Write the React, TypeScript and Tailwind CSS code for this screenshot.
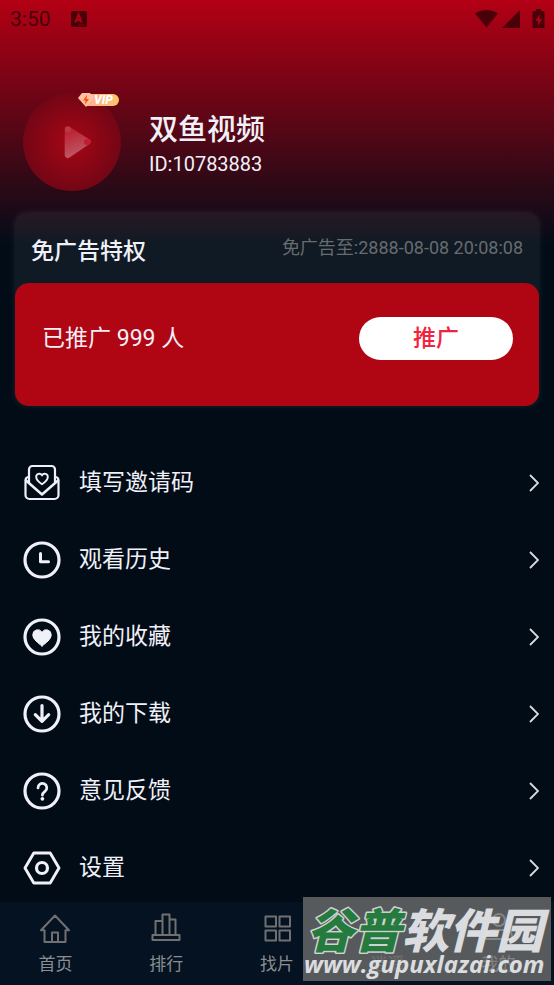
// src/pages/ProfilePage.tsx
import React from "react";

const menuItems = [
  { label: "填写邀请码", icon: "invite" },
  { label: "观看历史", icon: "history" },
  { label: "我的收藏", icon: "favorite" },
  { label: "我的下载", icon: "download" },
  { label: "意见反馈", icon: "feedback" },
  { label: "设置", icon: "settings" }
];

const tabs = [
  { label: "首页", icon: "home" },
  { label: "排行", icon: "rank" },
  { label: "找片", icon: "grid" },
  { label: "逍遥", icon: "discover" },
  { label: "我的", icon: "user" }
];

const activeTab = "user";

function MenuIcon({ name }: { name: string }) {
  return (
    <svg viewBox="0 0 38 38" className="size-[38px] shrink-0" fill="none" stroke="#f0f0f8" strokeLinecap="round" strokeLinejoin="round" aria-hidden="true">
      {name === "invite" && (
        <g strokeWidth="2.200">
          <path d="M6 19V5.500a3.500 3.500 0 0 1 3.500-3.500h19a3.500 3.500 0 0 1 3.500 3.500V19" />
          <path d="M6 13c-2 0-3.500 1.500-3.500 3.500V31a4 4 0 0 0 4 4h25a4 4 0 0 0 4-4V16.500C35.500 14.500 34 13 32 13" />
          <path d="M3 16.500 19 30.500 35 16.500" strokeWidth="2.500" />
          <path d="M19 20.200c-2.500-1.700-5.800-4-5.800-7.200a3.100 3.100 0 0 1 5.800-1.600A3.100 3.100 0 0 1 24.800 13c0 3.200-3.300 5.500-5.800 7.200Z" strokeWidth="1.900" />
        </g>
      )}
      {["history", "favorite", "download", "feedback"].includes(name) && (
        <circle cx="19" cy="19" r="17" strokeWidth="3.200" />
      )}
      {name === "history" && <path d="M17.500 12.500V20.800H25.500" strokeWidth="3" />}
      {name === "favorite" && (
        <path d="M19 28c-4-3-9.200-6.700-9.200-11.200A4.900 4.900 0 0 1 19 14.300a4.900 4.900 0 0 1 9.200 2.500C28.200 21.300 23 25 19 28Z" fill="#f0f0f8" strokeWidth="1" />
      )}
      {name === "download" && <path d="M19 10.500V26M12.300 19.700 19 26.300l6.700-6.600" strokeWidth="3.200" />}
      {name === "feedback" && (
        <g>
          <path d="M15 16a4.400 4.400 0 1 1 7 3.300c-1.600 1.200-2.600 1.900-2.600 3.900" strokeWidth="2.700" />
          <circle cx="19.400" cy="26.800" r="1.900" fill="#f0f0f8" stroke="none" />
        </g>
      )}
      {name === "settings" && (
        <g>
          <path d="M10.800 4h16.400L36 19l-8.800 15H10.800L2 19Z" strokeWidth="2.900" />
          <circle cx="19" cy="19" r="5.500" strokeWidth="3.200" />
        </g>
      )}
    </svg>
  );
}

function TabIcon({ name }: { name: string }) {
  return (
    <svg viewBox="0 0 32 32" className="size-8" fill="none" stroke="currentColor" strokeWidth="2" strokeLinejoin="round" aria-hidden="true">
      {name === "home" && <path d="M16 3.500 2 18.200h3.500V30h21V18.200H30L16 3.500ZM13 30V20.500h6V30" />}
      {name === "rank" && (
        <path d="M5.500 22V9h6M12.500 22V2.500h7V22M19.500 7.500h6V22M2.500 23h27v5h-27Z" />
      )}
      {name === "grid" && <path d="M4.500 4.500H15v10H4.500ZM18.500 4.500h10.500v10H18.500ZM4.500 18.500H15v10H4.500ZM18.500 18.500h10.500v10H18.500Z" />}
      {name === "discover" && <path d="m4 4 12 24L28 4l-12 7Z" />}
      {name === "user" && (
        <g>
          <circle cx="16" cy="8" r="6" />
          <path d="M3 27v-3a6 6 0 0 1 6-6h14a6 6 0 0 1 6 6v3Z" />
        </g>
      )}
    </svg>
  );
}

function StatusBar() {
  return (
    <div className="flex h-[38px] items-center justify-between pl-[10px] pr-[9px] text-[#490009]">
      <div className="flex items-center gap-5">
        <span className="text-[21px] leading-6">3:50</span>
        <svg viewBox="0 0 16 16" className="size-4" aria-hidden="true">
          <rect width="16" height="16" rx="2" fill="currentColor" />
          <path d="m4.300 11.500 3.200-8 3.200 8M5.200 9h4.600" fill="none" stroke="#b00014" strokeWidth="2" />
          <path d="M8 14h6" stroke="#a80013" strokeDasharray="1 1" />
        </svg>
      </div>
      <svg viewBox="0 0 70 20" className="h-5 w-[70px]" fill="currentColor" aria-hidden="true">
        <path d="M0 4.500C6.500-.3 16.500-.3 23 4.500L11.500 18.500Z" />
        <path d="M45 1v18H27Z" />
        <path d="M61 0h5v2h2a1.500 1.500 0 0 1 1.500 1.500v14A1.500 1.500 0 0 1 68 19h-9a1.500 1.500 0 0 1-1.500-1.500v-14A1.500 1.500 0 0 1 59 2h2Z" />
        <path d="m64.500 5-4 7h2.500v5l4-7h-2.500Z" fill="#b00014" />
      </svg>
    </div>
  );
}

function ProfileHeader() {
  return (
    <header className="flex items-center gap-7 pl-[23px]">
      <div className="relative">
        <svg viewBox="0 0 98 98" className="size-[98px]" aria-hidden="true">
          <defs>
            <radialGradient id="avatar-bg">
              <stop offset="0" stopColor="#a80615" />
              <stop offset="1" stopColor="#730615" />
            </radialGradient>
            <linearGradient id="avatar-play" x1="0" y1="0" x2="0.300" y2="1">
              <stop offset="0" stopColor="#bb1628" />
              <stop offset="1" stopColor="#bd5967" />
            </linearGradient>
          </defs>
          <circle cx="49" cy="49" r="49" fill="url(#avatar-bg)" />
          <path d="M46 33.500 66.500 46.500a2.800 2.800 0 0 1 0 4.600L46.500 64.500a3 3 0 0 1-4.800-2.300V35.800c0-2.500 2.300-3.500 4.300-2.300Z" fill="url(#avatar-play)" />
          <circle cx="45" cy="36.500" r="3" fill="#b83a49" />
          <circle cx="64" cy="49" r="3" fill="#c51930" />
        </svg>
        <div className="absolute left-[55px] top-0">
          <svg viewBox="0 0 42 14" className="h-[14px] w-[42px]" aria-hidden="true">
            <defs>
              <linearGradient id="vip-bg">
                <stop offset="0" stopColor="#ffae91" />
                <stop offset="1" stopColor="#f9c56c" />
              </linearGradient>
            </defs>
            <path d="M8 1h27a6 6 0 0 1 0 12H8Z" fill="url(#vip-bg)" />
            <path d="M4 0h8l4 5-8 9L0 5Z" fill="#ffc1a1" />
            <path d="M9 2 5 7.500h2.500L7 11.500 11 6H8.500Z" fill="#ff5208" />
            <text x="16" y="11" fill="white" fontFamily="Roboto, sans-serif" fontSize="12" fontWeight="900" fontStyle="italic">VIP</text>
          </svg>
        </div>
      </div>
      <div className="pt-2 text-[#f0f0f8]">
        <h1 className="text-[29px] font-medium leading-9">双鱼视频</h1>
        <p className="text-[20px] leading-8">ID:10783883</p>
      </div>
    </header>
  );
}

function PromoCard() {
  return (
    <section className="mx-[15px] mt-[22px] rounded-xl bg-[#ffffff0f] shadow-[0_0_6px_#ffffff1a]">
      <div className="flex h-[70px] items-center justify-between px-4">
        <h2 className="pt-2 text-[23px] font-medium leading-8 text-[#f0f0f8]">免广告特权</h2>
        <span className="text-[18px] leading-6 text-[#686b6e]">免广告至:2888-08-08 20:08:08</span>
      </div>
      <div className="flex h-[123px] items-start justify-between rounded-[14px] bg-[#b00614] pl-[27px] pr-[26px] pt-[34px]">
        <p className="text-[23px] leading-[43px] text-[#f0f0f8]">已推广 999 人</p>
        <button type="button" className="h-[43px] w-[154px] cursor-pointer rounded-full bg-white text-[23px] font-medium leading-8 text-[#f2233e]">
          推广
        </button>
      </div>
    </section>
  );
}

function Watermark() {
  return (
    <div className="pointer-events-none absolute -top-[5px] right-[3px] h-[84px] w-[248px] bg-[#6b6b6bd0]" aria-hidden="true">
      <svg viewBox="0 0 248 84" className="h-full w-full overflow-visible" opacity="0.950">
        <g fontFamily="'Noto Sans CJK SC', sans-serif" fontSize="47" fontWeight="900" fontStyle="italic" strokeLinejoin="round">
          <text x="4" y="51" fill="#237c3c" stroke="#d5d9d8" strokeWidth="3" paintOrder="stroke">谷普</text>
          <text x="99" y="51" fill="#e2e4e6">软件园</text>
        </g>
        <text x="1" y="76" fill="#e2e4e6" fontFamily="'Open Sans', sans-serif" fontSize="24" fontWeight="700" fontStyle="italic">www.gupuxlazai.com</text>
      </svg>
    </div>
  );
}

export default function App() {
  return (
    <div className="flex min-h-screen flex-col bg-[#020c17] bg-[linear-gradient(#b40014,#020c17)] bg-[length:100%_244px] bg-no-repeat font-['Roboto','Noto_Sans_CJK_SC',sans-serif]">
      <StatusBar />
      <main className="flex-1 pt-[55px]">
        <ProfileHeader />
        <PromoCard />
        <ul className="mt-[45px] flex flex-col gap-[13px]">
          {menuItems.map((item) => (
            <li key={item.label}>
              <a href="#" className="flex h-16 items-center gap-[18px] pl-[23px] pr-[15px]">
                <MenuIcon name={item.icon} />
                <span className="flex-1 text-[23px] leading-8 text-[#f0f0f8]">{item.label}</span>
                <svg viewBox="0 0 10 18" className="h-[18px] w-[10px]" fill="none" stroke="#d9dcdf" strokeWidth="1.800" aria-hidden="true">
                  <path d="m1 1 8 8-8 8" />
                </svg>
              </a>
            </li>
          ))}
        </ul>
      </main>
      <nav className="relative grid h-[83px] grid-cols-5 bg-[#041222]">
        {tabs.map((tab) => (
          <a key={tab.label} href="#" className="flex flex-col items-center gap-2 pt-[10px] text-[17px] leading-6">
            <span className={tab.icon === activeTab ? "text-[#f0f0f8]" : "text-[#707070]"}>
              <TabIcon name={tab.icon} />
            </span>
            <span className={tab.icon === activeTab ? "text-[#f0f0f8]" : "text-[#8b8d90]"}>{tab.label}</span>
          </a>
        ))}
        <Watermark />
      </nav>
    </div>
  );
}
